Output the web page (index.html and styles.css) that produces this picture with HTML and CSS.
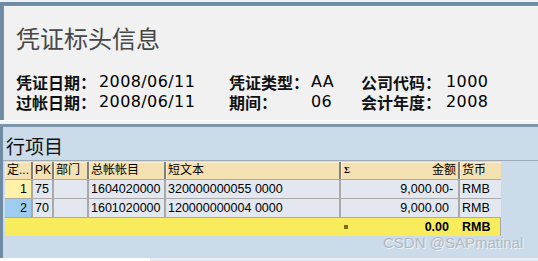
FILE: index.html
```html
<!DOCTYPE html>
<html lang="zh-CN">
<head>
  <meta charset="UTF-8">
  <title>凭证显示</title>
  <link rel="stylesheet" href="styles.css">
</head>
<body>
  <div class="screen">
    <div class="top-edge"></div>

    <section class="doc-header">
      <h1 class="doc-title">凭证标头信息</h1>
      <div class="fields">
        <span class="lbl">凭证日期：</span><span class="val">2008/06/11</span>
        <span class="lbl">凭证类型：</span><span class="val">AA</span>
        <span class="lbl">公司代码：</span><span class="val">1000</span>
        <span class="lbl">过帐日期：</span><span class="val">2008/06/11</span>
        <span class="lbl">期间：</span><span class="val">06</span>
        <span class="lbl">会计年度：</span><span class="val">2008</span>
      </div>
    </section>

    <div class="divider"></div>

    <section class="items">
      <h2 class="items-title">行项目</h2>
      <div class="table">
        <div class="row head">
          <div class="cell">定...</div>
          <div class="cell">PK</div>
          <div class="cell">部门</div>
          <div class="cell">总帐帐目</div>
          <div class="cell">短文本</div>
          <div class="cell amount-head"><span class="sigma">Σ</span><span>金额</span></div>
          <div class="cell">货币</div>
        </div>
        <div class="row">
          <div class="cell rh rh-sel">1</div>
          <div class="cell">75</div>
          <div class="cell"></div>
          <div class="cell">1604020000</div>
          <div class="cell">320000000055 0000</div>
          <div class="cell num">9,000.00<span class="sign">-</span></div>
          <div class="cell">RMB</div>
        </div>
        <div class="row">
          <div class="cell rh rh-cur">2</div>
          <div class="cell">70</div>
          <div class="cell"></div>
          <div class="cell">1601020000</div>
          <div class="cell">120000000004 0000</div>
          <div class="cell num">9,000.00<span class="sign"></span></div>
          <div class="cell">RMB</div>
        </div>
        <div class="row total">
          <div class="cell"></div>
          <div class="cell"></div>
          <div class="cell"></div>
          <div class="cell"></div>
          <div class="cell"></div>
          <div class="cell num total-amount"><span class="marker"></span><span>0.00<span class="sign"></span></span></div>
          <div class="cell">RMB</div>
        </div>
      </div>
      <div class="watermark">CSDN @SAPmatinal</div>
    </section>

    <div class="bottom-strip"></div>
  </div>
</body>
</html>
```

FILE: styles.css
```css
* {
  box-sizing: border-box;
}

body {
  margin: 0;
  font-family: "Liberation Sans", "Noto Sans CJK SC", sans-serif;
  background: #fff;
}

.screen {
  position: relative;
  width: 538px;
  height: 261px;
  overflow: hidden;
}

.top-edge {
  height: 2px;
  background: #eef2f8;
}

/* header block */
.doc-header {
  height: 118px;
  padding: 21px 0 0 13px;
  background: #f1f1f1;
  border-top: 3px solid #6f8aa3;
  border-left: 3px solid #6f8aa3;
  box-shadow: inset 1px 1px 0 #8c8c8c;
}

.doc-title {
  margin: 0;
  font: 400 24px/24px "Noto Sans CJK SC", sans-serif;
  color: #474747;
}

.fields {
  margin-top: 22px;
  display: grid;
  grid-template-columns: 83px 130px 82px 50px 85px auto;
  grid-auto-rows: 20px;
  align-items: center;
}

.lbl {
  height: 20px;
  font: 700 16px/20px "Noto Sans CJK SC", sans-serif;
  color: #111;
}

.val {
  height: 20px;
  font: 400 16px/20px "DejaVu Sans", sans-serif;
  letter-spacing: 0.4px;
  color: #000;
}

.divider {
  height: 7px;
  background: linear-gradient(#fff 0 1px, #f3f3f3 1px 4px, #7d95ab 4px 7px);
}

/* line items */
.items {
  height: 131px;
  padding-top: 8px;
  background: #cbdbe9;
  border-left: 3px solid #6f8aa3;
}

.items-title {
  margin: 0;
  padding: 0 0 3px 3px;
  font: 400 19px/22px "Noto Sans CJK SC", sans-serif;
  color: #111;
  border-bottom: 1px solid #9eaab6;
}

.table {
  width: 496px;
  margin: 1px 0 0 2px;
  padding-right: 1px;
  display: flex;
  flex-direction: column;
  gap: 1px;
  background: #a9a9a9;
}

.row {
  display: grid;
  grid-template-columns: 26px 19px 33px 75px 173px 117px 41px;
  column-gap: 2px;
  height: 18px;
  background: #a9a9a9;
}

.cell {
  padding: 0 2px;
  font-size: 12.5px;
  line-height: 18px;
  white-space: nowrap;
  overflow: hidden;
  color: #000;
  background: #e3e8f0;
}

.row.head {
  height: 17px;
  background: #7f7f7f;
}

.row.head .cell {
  font-size: 12px;
  line-height: 17px;
  background: #f4e1b2;
  box-shadow: inset 1px 1px 0 #fbf0d4;
}

.amount-head {
  display: flex;
  justify-content: space-between;
}

.sigma {
  font: 700 9px/17px "Liberation Serif", serif;
  padding-left: 1px;
}

.rh {
  text-align: right;
  padding-right: 4px;
}

.rh-sel {
  background: #fff2a8;
}

.rh-cur {
  background: #9ecdef;
}

.num {
  text-align: right;
  padding-right: 4px;
}

.sign {
  display: inline-block;
  width: 5px;
  text-align: left;
}

.row.total {
  background: #f9ec5c;
}

.row.total .cell {
  background: transparent;
  font-weight: 700;
}

.total-amount {
  display: flex;
  justify-content: space-between;
  align-items: center;
}

.marker {
  width: 4px;
  height: 4px;
  margin-left: 1px;
  background: #7b6b00;
}

.watermark {
  position: absolute;
  left: 383px;
  top: 235px;
  font: 15px/15px "Liberation Sans", sans-serif;
  color: #b4b9bf;
  text-shadow: 1px 1px 0 #eef2f6;
}

.bottom-strip {
  height: 3px;
  background: linear-gradient(to right, #fff 150px, #e8edf3 150px);
}
```
